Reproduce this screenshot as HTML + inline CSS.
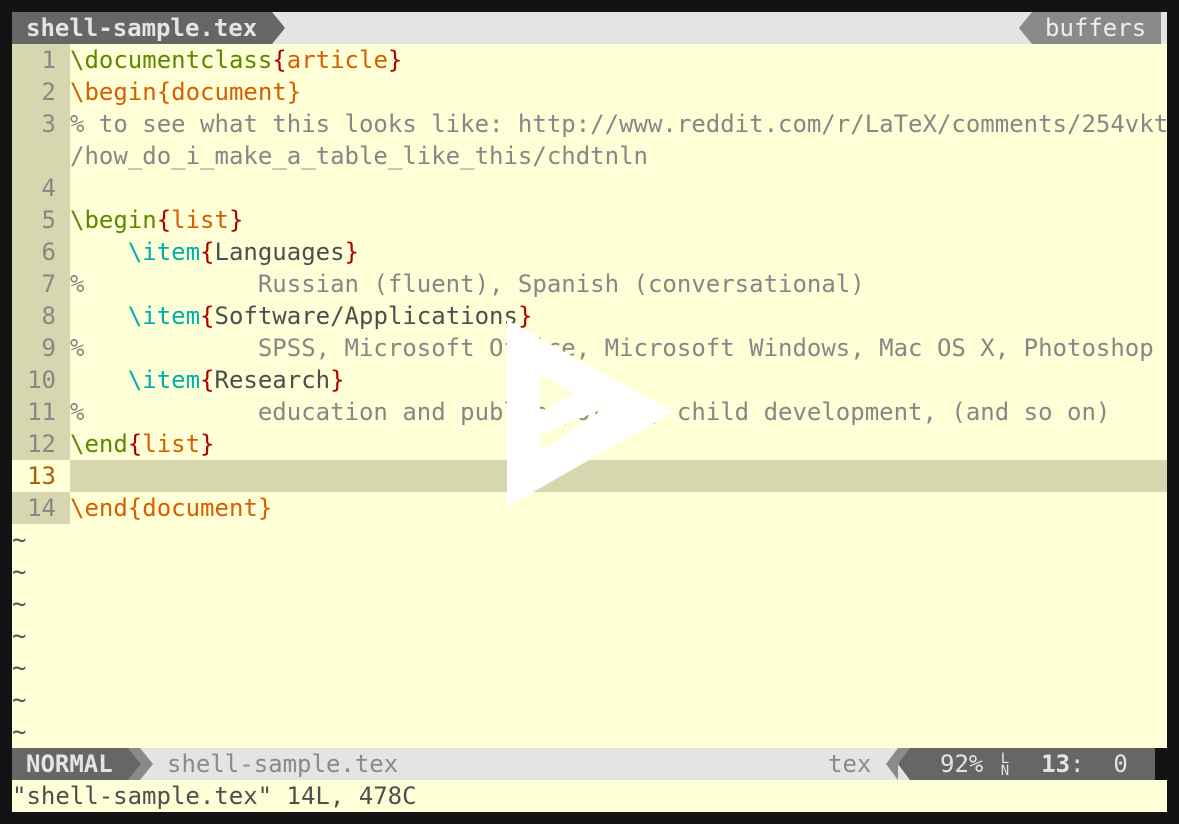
<!DOCTYPE html>
<html><head><meta charset="utf-8"><style>
*{margin:0;padding:0;box-sizing:border-box}
body{width:1179px;height:824px;background:#121315;position:relative;overflow:hidden;font-family:"DejaVu Sans Mono","Liberation Mono",monospace;font-size:24px}
.r{position:absolute;left:12px;width:1155px;height:32px;line-height:32px;white-space:pre;overflow:hidden}
.main{background:#ffffd7}
.g{display:inline-block;width:58px;background:#d7d7af;color:#878787;text-align:right;padding-right:14px;height:32px}
.t{color:#5f8700}.o{color:#d75f00}.b{color:#af0000}.c{color:#878787}.y{color:#00afaf}.n{color:#4e4e4e}
.tl{color:#4e4e4e;background:#ffffd7}
</style></head><body>
<div class="r" style="top:12px;background:#e4e4e4">
<div style="position:absolute;left:0;top:0;width:260px;height:32px;background:#666;color:#e4e4e4;font-weight:bold;padding-left:14px">shell-sample.tex</div>
<svg style="position:absolute;left:260px;top:0" width="14" height="32"><polygon points="0,0 13,16 0,32" fill="#666"/></svg>
<svg style="position:absolute;left:1006px;top:0" width="14" height="32"><polygon points="14,0 1,16 14,32" fill="#8a8a8a"/></svg>
<div style="position:absolute;left:1020px;top:0;width:129px;height:32px;background:#8a8a8a;color:#eee;padding-left:13px">buffers</div>
</div>
<div class="r main" style="top:44px"><span class="g">1</span><span class="t">\documentclass</span><span class="b">{</span><span class="o">article</span><span class="b">}</span></div>
<div class="r main" style="top:76px"><span class="g">2</span><span class="o">\begin{document}</span></div>
<div class="r main" style="top:108px"><span class="g">3</span><span class="c">% to see what this looks like: http://www.reddit.com/r/LaTeX/comments/254vkt</span></div>
<div class="r main" style="top:140px"><span class="g"> </span><span class="c">/how_do_i_make_a_table_like_this/chdtnln</span></div>
<div class="r main" style="top:172px"><span class="g">4</span></div>
<div class="r main" style="top:204px"><span class="g">5</span><span class="t">\begin</span><span class="b">{</span><span class="o">list</span><span class="b">}</span></div>
<div class="r main" style="top:236px"><span class="g">6</span>    <span class="y">\item</span><span class="b">{</span><span class="n">Languages</span><span class="b">}</span></div>
<div class="r main" style="top:268px"><span class="g">7</span><span class="c">%            Russian (fluent), Spanish (conversational)</span></div>
<div class="r main" style="top:300px"><span class="g">8</span>    <span class="y">\item</span><span class="b">{</span><span class="n">Software/Applications</span><span class="b">}</span></div>
<div class="r main" style="top:332px"><span class="g">9</span><span class="c">%            SPSS, Microsoft Office, Microsoft Windows, Mac OS X, Photoshop</span></div>
<div class="r main" style="top:364px"><span class="g">10</span>    <span class="y">\item</span><span class="b">{</span><span class="n">Research</span><span class="b">}</span></div>
<div class="r main" style="top:396px"><span class="g">11</span><span class="c">%            education and public policy, child development, (and so on)</span></div>
<div class="r main" style="top:428px"><span class="g">12</span><span class="t">\end</span><span class="b">{</span><span class="o">list</span><span class="b">}</span></div>
<div class="r" style="top:460px;background:#d7d7af"><span class="g" style="background:#ffffd7;color:#af5f00">13</span></div>
<div class="r main" style="top:492px"><span class="g">14</span><span class="o">\end{document}</span></div>
<div class="r tl" style="top:524px">~</div>
<div class="r tl" style="top:556px">~</div>
<div class="r tl" style="top:588px">~</div>
<div class="r tl" style="top:620px">~</div>
<div class="r tl" style="top:652px">~</div>
<div class="r tl" style="top:684px">~</div>
<div class="r tl" style="top:716px">~</div>
<div class="r" style="top:748px;background:#e4e4e4;width:1143px">
<div style="position:absolute;left:0;top:0;width:116px;height:32px;background:#666;color:#e4e4e4;font-weight:bold;padding-left:14px">NORMAL</div>
<svg style="position:absolute;left:116px;top:0" width="26" height="32"><polygon points="0,0 13,16 0,32 12,32 25,16 12,0" fill="#8a8a8a"/><polygon points="0,0 13,16 0,32" fill="#666"/></svg>
<div style="position:absolute;left:155px;top:0;color:#8a8a8a">shell-sample.tex</div>
<div style="position:absolute;left:816px;top:0;color:#8a8a8a">tex</div>
<svg style="position:absolute;left:874px;top:0" width="24" height="32"><polygon points="12,0 0,16 12,32" fill="#8a8a8a"/><polygon points="12,0 24,0 24,32 12,32 24,32 12,16" fill="#8a8a8a"/><polygon points="24,0 12,16 24,32" fill="#666"/></svg>
<div style="position:absolute;left:898px;top:0;width:245px;height:32px;background:#666;color:#e4e4e4;padding-left:30px">92% <span style="font-size:14px;display:inline-block;line-height:12px;vertical-align:middle;width:14.45px;text-align:center">L<br>N</span>  <b>13</b>:  0</div>
</div>
<div class="r tl" style="top:780px">"shell-sample.tex" 14L, 478C</div>
<svg style="position:absolute;left:0;top:0" width="1179" height="824"><path fill="#fff" fill-rule="evenodd" d="M507 320 L673 412 L507 507 Z M540 374 L574 393 L540 413 Z M540 435 L605 408 L540 452 Z"/></svg>
</body></html>
